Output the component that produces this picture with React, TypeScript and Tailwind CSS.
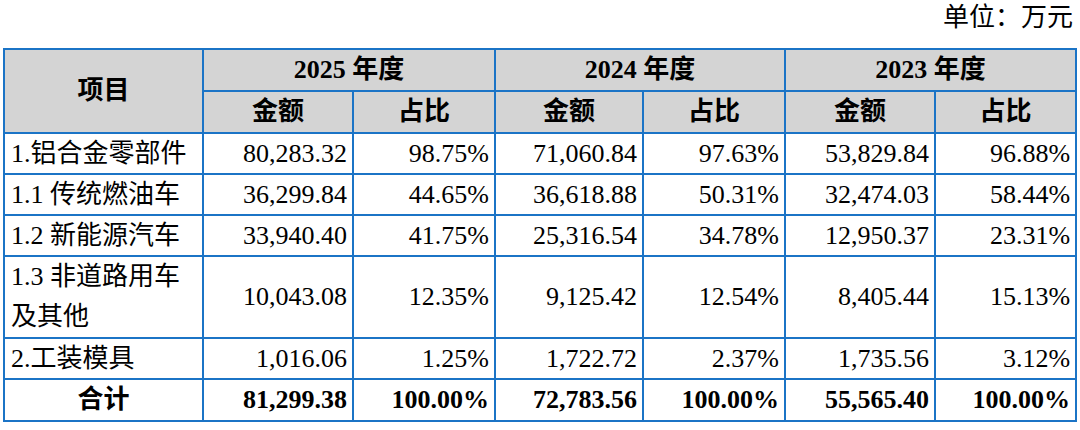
import React from 'react';

type Row = {
    label: React.ReactNode;
    values: string[];
    tall?: boolean;
};

const rows: Row[] = [
    { label: '1.铝合金零部件', values: ['80,283.32', '98.75%', '71,060.84', '97.63%', '53,829.84', '96.88%'] },
    { label: '1.1 传统燃油车', values: ['36,299.84', '44.65%', '36,618.88', '50.31%', '32,474.03', '58.44%'] },
    { label: '1.2 新能源汽车', values: ['33,940.40', '41.75%', '25,316.54', '34.78%', '12,950.37', '23.31%'] },
    {
        label: (
            <>
                1.3 非道路用车
                <br />
                及其他
            </>
        ),
        values: ['10,043.08', '12.35%', '9,125.42', '12.54%', '8,405.44', '15.13%'],
        tall: true,
    },
    { label: '2.工装模具', values: ['1,016.06', '1.25%', '1,722.72', '2.37%', '1,735.56', '3.12%'] },
];

const total = ['81,299.38', '100.00%', '72,783.56', '100.00%', '55,565.40', '100.00%'];

const cell = 'border-2 border-[#1b74c6] p-0';

const App: React.FC = () => {
    return (
        <div className="w-[1080px] h-[430px] bg-white text-black text-[26px] leading-none overflow-hidden font-['Liberation_Serif','Noto_Sans_CJK_SC',serif]">
            {/* unit note */}
            <div className="h-[48px] flex items-center justify-end pr-[7px] pb-[12px]">单位：万元</div>

            <div className="pl-[3px]">
                <table className="table-fixed border-collapse w-[1072px] font-['Liberation_Serif','Noto_Sans_CJK_SC',serif]">
                    <colgroup>
                        <col className="w-[199px]" />
                        <col className="w-[150px]" />
                        <col className="w-[142px]" />
                        <col className="w-[148px]" />
                        <col className="w-[142px]" />
                        <col className="w-[150px]" />
                        <col className="w-[141px]" />
                    </colgroup>
                    <thead className="bg-[#d4d4d4] font-bold">
                        <tr className="h-[42px]">
                            <th rowSpan={2} className={`${cell} text-center`}>项目</th>
                            <th colSpan={2} className={`${cell} text-center`}>2025 年度</th>
                            <th colSpan={2} className={`${cell} text-center`}>2024 年度</th>
                            <th colSpan={2} className={`${cell} text-center`}>2023 年度</th>
                        </tr>
                        <tr className="h-[42px]">
                            <th className={`${cell} text-center`}>金额</th>
                            <th className={`${cell} text-center`}>占比</th>
                            <th className={`${cell} text-center`}>金额</th>
                            <th className={`${cell} text-center`}>占比</th>
                            <th className={`${cell} text-center`}>金额</th>
                            <th className={`${cell} text-center`}>占比</th>
                        </tr>
                    </thead>
                    <tbody>
                        {rows.map((r, i) => (
                            <tr key={i} className={r.tall ? 'h-[81px]' : 'h-[41px]'}>
                                <td className={`${cell} text-left pl-[6px] ${r.tall ? 'leading-[40px]' : ''}`}>{r.label}</td>
                                {r.values.map((v, j) => (
                                    <td key={j} className={`${cell} text-right pr-[5px]`}>
                                        {v}
                                    </td>
                                ))}
                            </tr>
                        ))}
                        <tr className="h-[42px] font-bold">
                            <td className={`${cell} text-center`}>合计</td>
                            {total.map((v, j) => (
                                <td key={j} className={`${cell} text-right pr-[5px]`}>
                                    {v}
                                </td>
                            ))}
                        </tr>
                    </tbody>
                </table>
            </div>
        </div>
    );
};

export default App;
